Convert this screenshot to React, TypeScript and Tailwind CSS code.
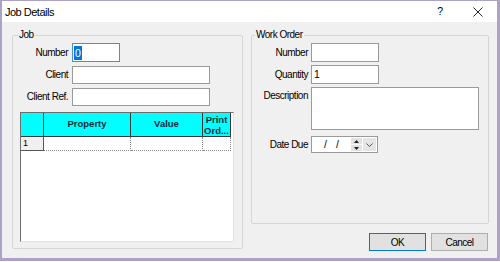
import React from "react";

const font = "font-['Liberation_Sans',sans-serif]";

function Label({ children, className = "" }: { children: React.ReactNode; className?: string }) {
  return (
    <div className={`w-[55px] shrink-0 text-right text-[10px] tracking-[-0.5px] leading-[12px] text-black ${className}`}>
      {children}
    </div>
  );
}

export default function App() {
  return (
    <div className="w-[500px] h-[262px] bg-white">
      <div
        className={`w-[500px] h-[261px] flex flex-col border-l-2 border-r-[3px] border-b-[3px] border-t border-[#aca2c8] bg-[#f0f0f0] ${font}`}
      >
        {/* Title bar */}
        <div className="h-[21px] shrink-0 bg-white flex items-center pl-[3px] pt-[1px]">
          <span className="text-[11px] tracking-[-0.5px] text-black leading-[13px]">Job Details</span>
          <div className="ml-auto flex items-center">
            <span className="text-[10.5px] text-black mr-[30px]">?</span>
            <svg width="10" height="10" viewBox="0 0 10 10" className="mr-[14px]">
              <path d="M0.5 0.5 L9.5 9.5 M9.5 0.5 L0.5 9.5" stroke="#222" strokeWidth="1" />
            </svg>
          </div>
        </div>

        {/* Body */}
        <div className="flex-1 flex pt-[13px] pl-[10px] gap-[8px]">
          {/* Job group */}
          <div className="relative w-[231px] h-[214px] border border-[#d5d5d5] rounded-[2px] flex flex-col pt-[7px] px-[7px]">
            <span className="absolute -top-[7px] left-[5px] px-[1px] bg-[#f0f0f0] text-[10px] tracking-[-0.5px] leading-[12px] text-black">
              Job
            </span>
            <div className="flex flex-col gap-[4px] -ml-[7px]">
              <div className="flex items-center gap-[4px]">
                <Label>Number</Label>
                <div className="w-[48px] h-[19px] border border-[#4a8fd4] bg-white flex items-center pl-[1px]">
                  <span className="bg-[#0078d7] text-white text-[10.5px] leading-[14px] px-[1px]">0</span>
                </div>
              </div>
              <div className="flex items-center gap-[4px]">
                <Label>Client</Label>
                <div className="w-[138px] h-[18px] border border-[#9a9a9a] bg-white" />
              </div>
              <div className="flex items-center gap-[4px]">
                <Label>Client Ref.</Label>
                <div className="w-[138px] h-[18px] border border-[#9a9a9a] bg-white" />
              </div>
            </div>

            {/* Data grid */}
            <div className="mt-[6px] w-[214px] h-[130px] bg-white border-l border-t border-l-[#6e6e6e] border-t-[#6e6e6e] border-r border-b border-r-[#e3e3e3] border-b-[#e3e3e3] flex flex-col">
              <div className="flex h-[24px]">
                <div className="w-[23px] bg-[#00ffff] border-r border-b border-[#3a3a3a]" />
                <div className="w-[87px] bg-[#00ffff] border-r border-b border-[#3a3a3a] flex items-center justify-center text-[9.5px] font-bold text-[#0c2b3a]">
                  Property
                </div>
                <div className="w-[72px] bg-[#00ffff] border-r border-b border-[#3a3a3a] flex items-center justify-center text-[9.5px] font-bold text-[#0c2b3a]">
                  Value
                </div>
                <div className="w-[28px] bg-[#00ffff] border-r border-b border-[#3a3a3a] flex flex-col items-center justify-center text-[9.5px] leading-[11px] font-bold text-[#0c2b3a] overflow-hidden">
                  <span>Print</span>
                  <span>Ord...</span>
                </div>
              </div>
              <div className="flex h-[14px]">
                <div className="w-[23px] bg-[#f0f0f0] border-r border-b border-[#555] text-[9px] leading-[13px] pl-[2px] text-black">
                  1
                </div>
                <div className="w-[87px] border-r border-b border-dotted border-[#8a8a8a]" />
                <div className="w-[72px] border-r border-b border-dotted border-[#8a8a8a]" />
                <div className="w-[28px] border-r border-b border-dotted border-[#8a8a8a]" />
              </div>
            </div>
          </div>

          {/* Right column */}
          <div className="w-[238px] flex flex-col">
            <div className="relative h-[189px] border border-[#d5d5d5] rounded-[2px] flex flex-col pt-[7px]">
              <span className="absolute -top-[7px] left-[3px] px-[1px] bg-[#f0f0f0] text-[10px] tracking-[-0.5px] leading-[12px] text-black">
                Work Order
              </span>
              <div className="flex items-center gap-[3px]">
                <Label className="w-[56px]">Number</Label>
                <div className="w-[68px] h-[19px] border border-[#9a9a9a] bg-white" />
              </div>
              <div className="flex items-center gap-[3px] mt-[3px]">
                <Label className="w-[56px]">Quantity</Label>
                <div className="w-[68px] h-[19px] border border-[#9a9a9a] bg-white text-[10.5px] leading-[16px] pl-[2px] text-black">
                  1
                </div>
              </div>
              <div className="flex items-start gap-[3px] mt-[3px]">
                <Label className="w-[56px] pt-[3px]">Description</Label>
                <div className="w-[168px] h-[43px] border border-[#9a9a9a] bg-white" />
              </div>
              <div className="flex items-center gap-[3px] mt-[6px]">
                <Label className="w-[56px]">Date Due</Label>
                <div className="w-[67px] h-[17px] border border-[#9a9a9a] bg-white flex items-stretch">
                  <div className="flex-1 flex items-center text-[10.5px] text-black pl-[12px] gap-[9px]">
                    <span>/</span>
                    <span>/</span>
                  </div>
                  <div className="w-[11px] flex flex-col my-[1px] bg-[#e3e3e3]">
                    <div className="flex-1 flex items-center justify-center border-b border-[#f8f8f8]">
                      <svg width="5" height="3" viewBox="0 0 5 3">
                        <path d="M0 3 L2.5 0 L5 3 Z" fill="#222" />
                      </svg>
                    </div>
                    <div className="flex-1 flex items-center justify-center">
                      <svg width="5" height="3" viewBox="0 0 5 3">
                        <path d="M0 0 L2.5 3 L5 0 Z" fill="#222" />
                      </svg>
                    </div>
                  </div>
                  <div className="w-[13px] my-[1px] mr-[1px] ml-[1px] bg-[#e5e5e5] flex items-center justify-center">
                    <svg width="7" height="4" viewBox="0 0 7 4">
                      <path d="M0.5 0.5 L3.5 3.5 L6.5 0.5" stroke="#555" strokeWidth="1" fill="none" />
                    </svg>
                  </div>
                </div>
              </div>
            </div>

            <div className="flex justify-end gap-[5px] mt-[9px] pr-[1px]">
              <div className="w-[57px] h-[18px] border border-[#0078d7] bg-[#e1e1e1] flex items-center justify-center text-[10px] tracking-[-0.5px] text-black">
                OK
              </div>
              <div className="w-[57px] h-[18px] border border-[#adadad] bg-[#e1e1e1] flex items-center justify-center text-[10px] tracking-[-0.5px] text-black">
                Cancel
              </div>
            </div>
          </div>
        </div>
      </div>
    </div>
  );
}
